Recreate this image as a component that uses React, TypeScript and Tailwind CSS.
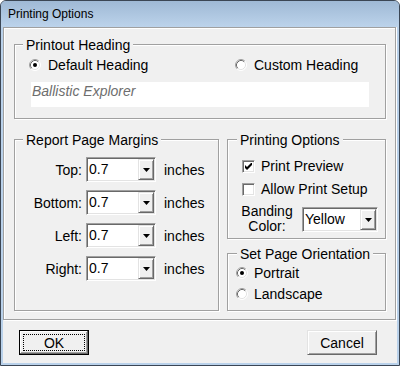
import type { ReactNode } from "react";

function Radio({ checked }: { checked?: boolean }) {
  return (
    <svg width="12" height="12" viewBox="0 0 12 12" className="shrink-0">
      <circle cx="6" cy="6" r="5" fill="#fff" />
      <path d="M2.11 9.89A5.5 5.5 0 0 1 9.89 2.11" fill="none" stroke="#a0a0a0" />
      <path d="M9.89 2.11A5.5 5.5 0 0 1 2.11 9.89" fill="none" stroke="#fff" />
      <path d="M2.82 9.18A4.5 4.5 0 0 1 9.18 2.82" fill="none" stroke="#696969" />
      <path d="M9.18 2.82A4.5 4.5 0 0 1 2.82 9.18" fill="none" stroke="#e3e3e3" />
      {checked && <circle cx="6" cy="6" r="2" fill="#000" />}
    </svg>
  );
}

function Check({ checked }: { checked?: boolean }) {
  return (
    <span className="flex h-[13px] w-[13px] shrink-0 items-center justify-center border border-t-[#a0a0a0] border-l-[#a0a0a0] border-r-white border-b-white bg-white shadow-[inset_1px_1px_0_#696969,inset_-1px_-1px_0_#e3e3e3]">
      {checked && (
        <svg width="7" height="7" viewBox="0 0 7 7">
          <polygon points="0,2 2,4 7,-1 7,2 2,7 0,5" fill="#000" />
        </svg>
      )}
    </span>
  );
}

function Combo({ value, className }: { value: string; className: string }) {
  return (
    <div
      className={`flex h-[25px] border border-t-[#a0a0a0] border-l-[#a0a0a0] border-r-white border-b-white bg-white p-[1px] shadow-[inset_1px_1px_0_#696969,inset_-1px_-1px_0_#e3e3e3] ${className}`}
    >
      <span className="flex-1 pl-[1px] leading-[21px]">{value}</span>
      <span className="flex w-[16px] items-center justify-center border border-t-[#e3e3e3] border-l-[#e3e3e3] border-r-[#696969] border-b-[#696969] bg-[#f0f0f0] pt-[1px] shadow-[inset_1px_1px_0_#fff,inset_-1px_-1px_0_#a0a0a0]">
        <svg width="7" height="4" viewBox="0 0 7 4">
          <polygon points="0,0 7,0 3.5,4" fill="#000" />
        </svg>
      </span>
    </div>
  );
}

function Group({
  title,
  titleClass,
  className,
  children,
}: {
  title: string;
  titleClass: string;
  className: string;
  children: ReactNode;
}) {
  return (
    <div
      className={`relative border border-[#a0a0a0] shadow-[inset_1px_1px_0_#fff,1px_1px_0_#fff] ${className}`}
    >
      <span
        className={`absolute -top-[8px] whitespace-nowrap bg-[#f0f0f0] px-[3px] leading-[16px] ${titleClass}`}
      >
        {title}
      </span>
      {children}
    </div>
  );
}

export default function App() {
  const margins = ["Top", "Bottom", "Left", "Right"];

  return (
    <div className="flex h-[366px] w-[400px] flex-col overflow-hidden rounded-t-[6px] border border-[#3b4654] bg-[#b9d1ea] font-['Liberation_Sans',Arial,sans-serif] text-[14px] leading-[16px] text-black">
      <div className="h-[26px] shrink-0 bg-gradient-to-b from-[#9fb9d5] to-[#bcd3eb] pl-[7px] text-[12px] leading-[26px]">
        Printing Options
      </div>

      <div className="mx-[2px] mb-[2px] flex flex-1 flex-col bg-[#f0f0f0]">
        <div className="h-[293px] w-[393px] border border-[#a0a0a0] pt-[16px] pl-[10px] shadow-[inset_1px_1px_0_#fff,1px_1px_0_#fff]">
          <Group title="Printout Heading" titleClass="left-[8px]" className="h-[75px] w-[372px]">
            <div className="mt-[12px] flex h-[16px] items-center pl-[14px]">
              <div className="flex w-[206px] items-center gap-[7px]">
                <Radio checked />
                <span>Default Heading</span>
              </div>
              <div className="flex items-center gap-[7px]">
                <Radio />
                <span>Custom Heading</span>
              </div>
            </div>
            <div className="ml-[16px] mt-[9px] h-[25px] w-[338px] bg-white pl-[1px] pt-[1px] italic text-[#6e6e6e]">
              Ballistic Explorer
            </div>
          </Group>

          <div className="mt-[20px] flex gap-[8px]">
            <Group title="Report Page Margins" titleClass="left-[8px]" className="h-[172px] w-[205px]">
              <div className="mt-[17px] flex flex-col gap-[8px]">
                {margins.map((m) => (
                  <div key={m} className="flex h-[25px] items-center">
                    <span className="w-[67px] text-right">{m}:</span>
                    <Combo value="0.7" className="ml-[4px] w-[70px]" />
                    <span className="ml-[8px]">inches</span>
                  </div>
                ))}
              </div>
            </Group>

            <div className="flex flex-col gap-[14px]">
              <Group title="Printing Options" titleClass="left-[9px]" className="h-[100px] w-[159px]">
                <div className="mt-[18px] flex h-[16px] items-center gap-[6px] pl-[14px]">
                  <Check checked />
                  <span>Print Preview</span>
                </div>
                <div className="mt-[7px] flex h-[16px] items-center gap-[6px] pl-[14px]">
                  <Check />
                  <span>Allow Print Setup</span>
                </div>
                <div className="mt-[7px] flex h-[30px] items-center pl-[13px]">
                  <span className="w-[52px] text-center leading-[15px]">
                    Banding
                    <br />
                    Color:
                  </span>
                  <Combo value="Yellow" className="ml-[9px] w-[76px]" />
                </div>
              </Group>

              <Group title="Set Page Orientation" titleClass="left-[9px]" className="h-[58px] w-[159px]">
                <div className="mt-[11px] flex flex-col gap-[5px] pl-[8px]">
                  <div className="flex h-[16px] items-center gap-[6px]">
                    <Radio checked />
                    <span>Portrait</span>
                  </div>
                  <div className="flex h-[16px] items-center gap-[6px]">
                    <Radio />
                    <span>Landscape</span>
                  </div>
                </div>
              </Group>
            </div>
          </div>
        </div>

        <div className="mt-[10px] flex justify-between pl-[16px] pr-[20px]">
          <button className="h-[25px] w-[70px] border border-black bg-[#f0f0f0] p-[3px] shadow-[inset_-1px_-1px_0_#696969,inset_1px_1px_0_#fff,inset_-2px_-2px_0_#a0a0a0]">
            <span className="flex h-full items-center justify-center border border-dotted border-black">
              OK
            </span>
          </button>
          <button className="h-[25px] w-[70px] border border-t-[#e3e3e3] border-l-[#e3e3e3] border-r-[#696969] border-b-[#696969] bg-[#f0f0f0] shadow-[inset_1px_1px_0_#fff,inset_-1px_-1px_0_#a0a0a0]">
            Cancel
          </button>
        </div>
      </div>
    </div>
  );
}
